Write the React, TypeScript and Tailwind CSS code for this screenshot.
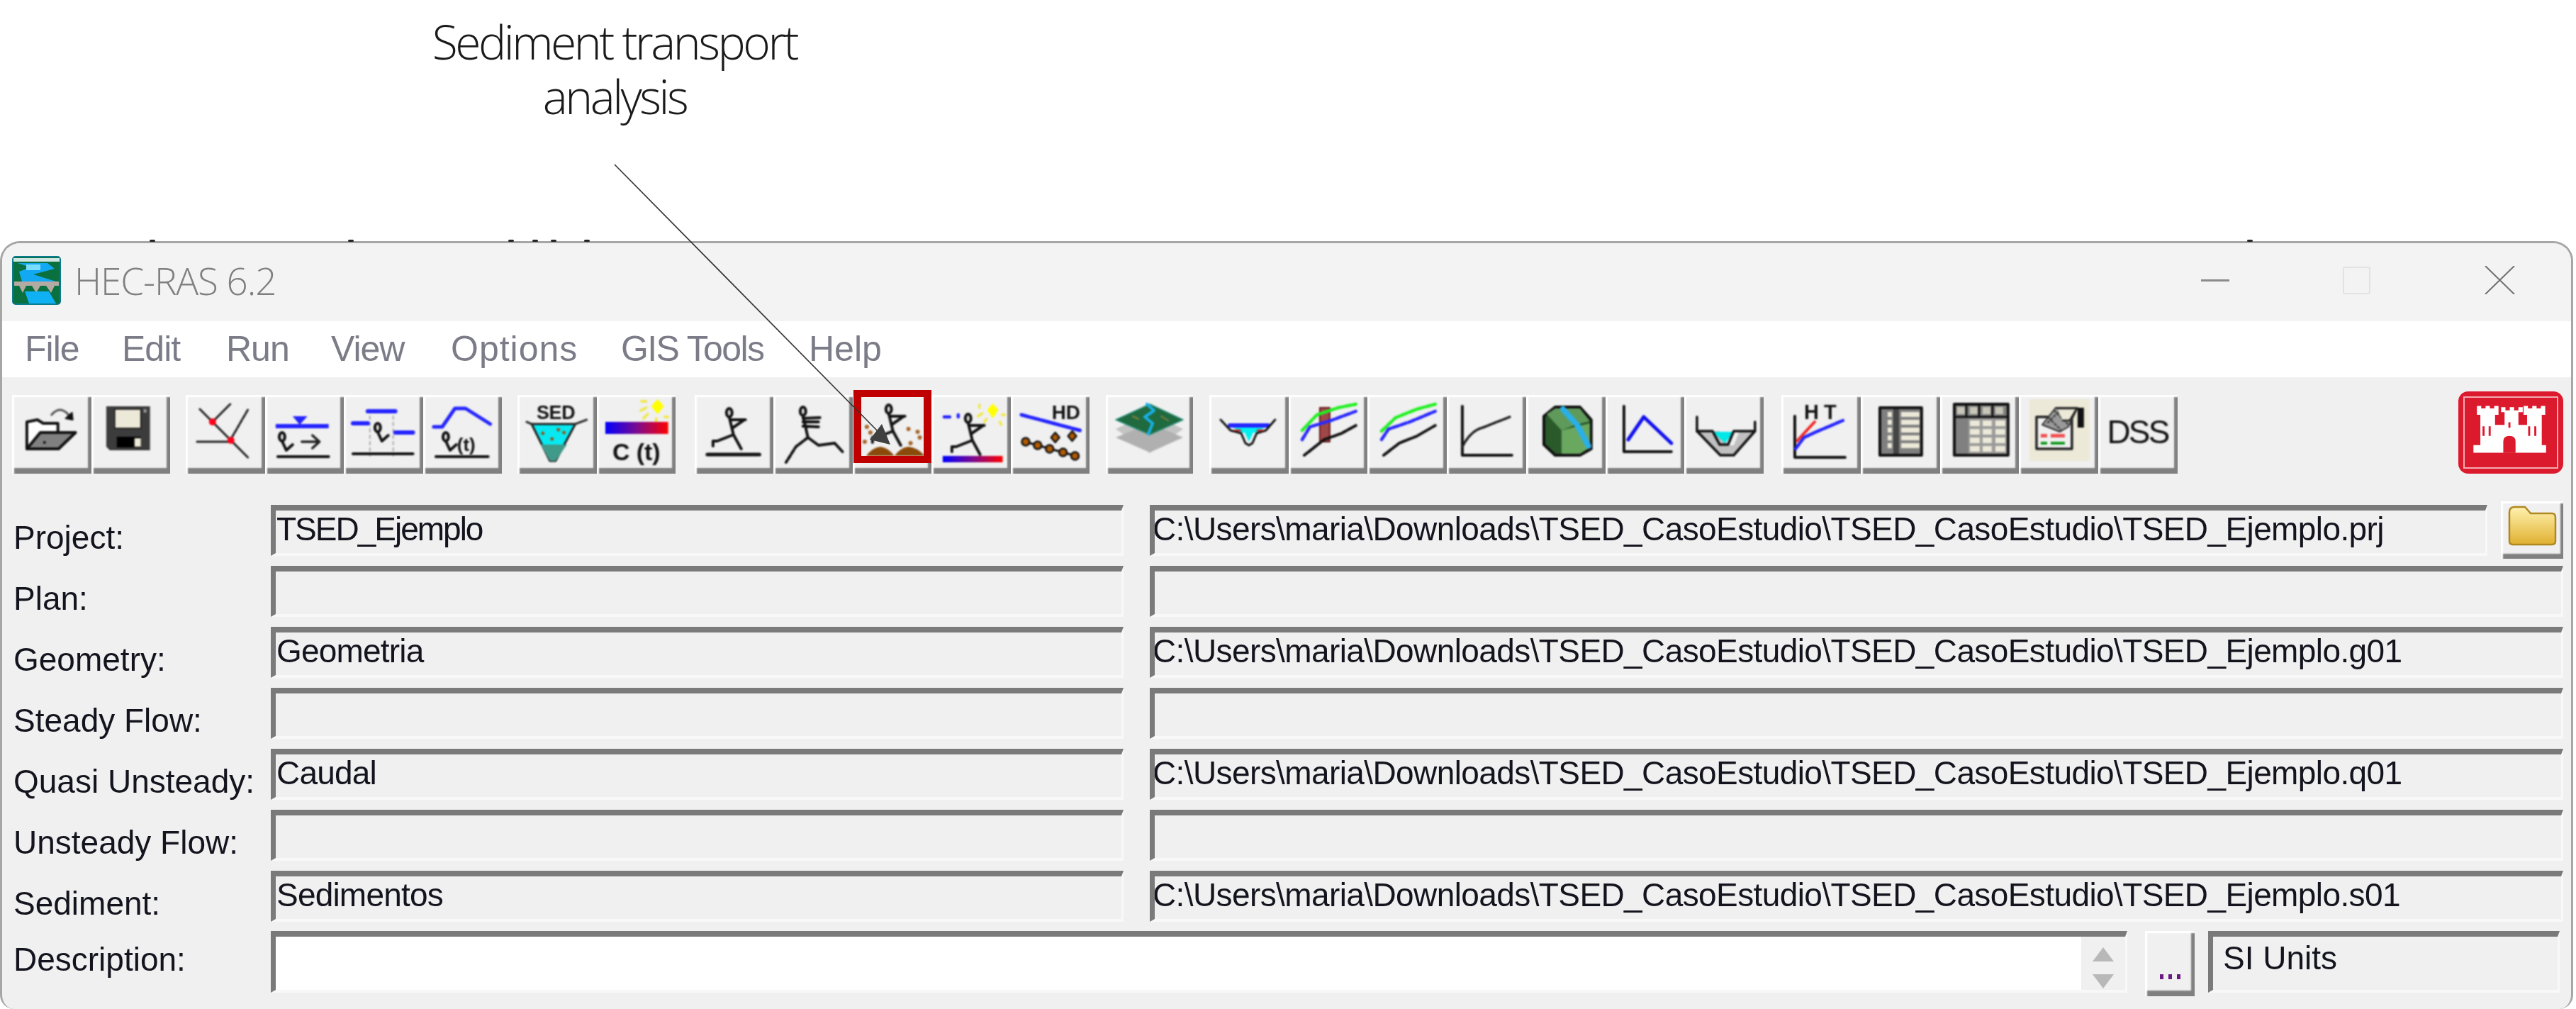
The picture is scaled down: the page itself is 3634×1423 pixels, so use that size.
import type { ReactNode } from "react";

const SANS = "Liberation Sans, sans-serif";

function Btn({ children, vw = 112 }: { children?: ReactNode; vw?: number }) {
  return (
    <div className="relative h-[111px] flex-1 bg-[#f0f0f0] shadow-[inset_3px_3px_2px_#fff,inset_-5px_-8px_2px_#808080]">
      <svg viewBox={`0 0 ${vw} 111`} preserveAspectRatio="none" className="h-full w-full blur-[0.9px]" fill="none" strokeLinecap="round" strokeLinejoin="round">
        {children}
      </svg>
    </div>
  );
}

// little "q" mark used on the flow buttons
function Gauge({ x, y }: { x: number; y: number }) {
  return (
    <g transform={`translate(${x} ${y})`} stroke="#111" strokeWidth="4">
      <ellipse cx="0" cy="0" rx="4" ry="6" fill="#ddd" />
      <path d="M0 6 L6 19 L15 11" />
    </g>
  );
}

function Runner({ x, y }: { x: number; y: number }) {
  return (
    <g transform={`translate(${x} ${y})`} stroke="#111" strokeWidth="4">
      <ellipse cx="0" cy="0" rx="4" ry="6" fill="#ddd" />
      <path d="M0 6 L6 31 L-17 40 L-23 40 L-23 47 M6 31 L17 51 M1 10 L23 10 M4 22 L20 11" />
    </g>
  );
}

function Curves({ green, blue, black }: { green: string; blue: string; black: string }) {
  return (
    <>
      <path d={green} stroke="#20f020" strokeWidth="4.5" strokeDasharray="9 3" />
      <path d={blue} stroke="#2828ff" strokeWidth="4.5" strokeDasharray="9 3" />
      <path d={black} stroke="#111" strokeWidth="4" strokeDasharray="6 2" />
    </>
  );
}

function Group({ w, ml, children }: { w: number; ml: string; children: ReactNode }) {
  return (
    <div className={`flex ${ml}`} style={{ width: w }}>
      {children}
    </div>
  );
}

function Field({ children, className = "" }: { children?: ReactNode; className?: string }) {
  return (
    <div className={`h-[72px] overflow-hidden whitespace-nowrap border-t-[8px] border-l-[7px] border-r-[3px] border-b-[4px] border-t-[#7a7a7a] border-l-[#7a7a7a] border-r-[#f8f8f8] border-b-[#f8f8f8] bg-[#f0f0f0] pl-px text-[46px] leading-[52px] text-[#14141e] blur-[0.5px] ${className}`}>
      {children}
    </div>
  );
}

const PATH = "C:\\Users\\maria\\Downloads\\TSED_CasoEstudio\\TSED_CasoEstudio\\TSED_Ejemplo";

const rows = [
  { label: "Project:", name: "TSED_Ejemplo", path: PATH + ".prj", nameClass: "tracking-[-2px]" },
  { label: "Plan:" },
  { label: "Geometry:", name: "Geometria", path: PATH + ".g01", nameClass: "tracking-[-0.8px]" },
  { label: "Steady Flow:" },
  { label: "Quasi Unsteady:", name: "Caudal", path: PATH + ".q01", nameClass: "tracking-[-0.8px]" },
  { label: "Unsteady Flow:" },
  { label: "Sediment:", name: "Sedimentos", path: PATH + ".s01", nameClass: "tracking-[-0.8px]" },
];

const menu = [
  { t: "File", c: "w-[74px] tracking-[-1px]" },
  { t: "Edit", c: "w-[84px] tracking-[-1px]" },
  { t: "Run", c: "w-[85px] tracking-[-1px]" },
  { t: "View", c: "w-[106px] tracking-[-1px]" },
  { t: "Options", c: "w-[177px] tracking-[1px]" },
  { t: "GIS Tools", c: "w-[202px] tracking-[-1.6px]" },
  { t: "Help", c: "w-[105px] tracking-[0px]" },
];

const specks = [211, 491, 717, 751, 777, 824, 3170];

export default function App() {
  return (
    <div className="relative h-[1423px] w-[3634px] overflow-hidden bg-white" style={{ fontFamily: SANS }}>
      <div className="h-[340px] w-[1734px] pt-[20px] text-center text-[66px] leading-[77px] font-light tracking-[-3.5px] text-[#1a1a1a] font-['Open_Sans',sans-serif]">
        <p>
          Sediment transport
          <br />
          analysis
        </p>
      </div>

      <div className="h-[1083px] w-[3630px] overflow-hidden rounded-t-[28px] rounded-b-[20px] border-x-[3px] border-t-[3px] border-[#a6a6a6] bg-[#f0f0f0]">
        {/* title bar */}
        <div className="flex h-[110px] items-center bg-[#f3f3f3] pb-[6px] pl-[14px]">
          <svg viewBox="0 0 69 69" className="h-[69px] w-[69px] blur-[0.6px]">
            <rect width="69" height="69" rx="5" fill="#0b7b8e" />
            <rect x="2" y="2" width="65" height="65" rx="3" fill="#0a7040" />
            <rect x="2" y="3" width="65" height="5" fill="#cfe6e0" />
            <path d="M8 10 H50 L60 18 L30 26 L62 36 H14 L10 22 L26 16 Z" fill="#12a8f2" />
            <rect x="20" y="12" width="20" height="8" fill="#7adcff" />
            <rect x="3" y="36" width="63" height="6" fill="#b3aaa2" />
            <path d="M10 42 H20 L15 52 Z M28 42 H40 L34 52 Z M48 42 H60 L55 52 Z" fill="#b3aaa2" />
            <path d="M18 50 H52 L62 67 H24 Z" fill="#10b0f4" />
          </svg>
          <span className="ml-[19px] text-[53px] leading-none font-light tracking-[-1.1px] text-[#808080] font-['Open_Sans',sans-serif]">HEC-RAS 6.2</span>
          <div className="ml-auto flex items-center pr-[79px]">
            <div className="h-[3px] w-[40px] bg-[#8a8a8a]" />
            <div className="ml-[160px] h-[39px] w-[39px] rounded-[3px] border-2 border-[#e2e2e2]" />
            <svg viewBox="0 0 43 40" className="ml-[161px] h-[40px] w-[43px]">
              <path d="M1 0 L42 40 M42 0 L1 40" stroke="#707070" strokeWidth="2" />
            </svg>
          </div>
        </div>

        {/* menu */}
        <div className="flex h-[79px] items-center gap-[63px] bg-white pb-[2px] pl-[32px] text-[50px] leading-none text-[#7c7c88] blur-[0.5px]">
          {menu.map((m) => (
            <span key={m.t} className={`whitespace-nowrap ${m.c}`}>{m.t}</span>
          ))}
        </div>

        {/* toolbar */}
        <div className="flex h-[180px] pt-[25px] pl-[14px]">
          <Group w={223} ml="">
            <Btn>
              <path d="M21 76 V38 L36 35 L44 40 H65 V53" fill="#fff" stroke="#111" strokeWidth="4" />
              <path d="M40 53 H90 L66 76 H21 Z" fill="#808080" stroke="#111" strokeWidth="4" />
              <circle cx="46" cy="67" r="2" fill="#111" />
              <path d="M56 28 Q68 14 80 28" stroke="#555" strokeWidth="3" />
              <path d="M76 33 L86 35 L85 25 Z" fill="#111" stroke="#111" strokeWidth="2" />
            </Btn>
            <Btn>
              <path d="M21 16 H83 V78 H26 L21 73 Z" fill="#3c3c3c" />
              <rect x="33" y="20" width="37" height="27" fill="#ece9d8" stroke="#111" strokeWidth="1.5" />
              <rect x="36" y="59" width="34" height="15" fill="#000" />
              <rect x="61" y="61" width="9" height="12" fill="#ece9d8" />
              <rect x="74" y="20" width="4" height="5" fill="#999" />
            </Btn>
          </Group>

          <Group w={446} ml="ml-[22px]">
            <Btn>
              <g stroke="#222" strokeWidth="3">
                <path d="M20 20 L88 88 M63 13 L38 38 M16 66 H63" />
                <path d="M88 21 L63 64" strokeDasharray="6 2" />
              </g>
              <circle cx="38" cy="38" r="5" fill="#ff0018" />
              <circle cx="64" cy="64" r="5" fill="#ff0018" />
            </Btn>
            <Btn>
              <path d="M39 30 H60 L49 42 Z" fill="#2424ff" />
              <rect x="15" y="41" width="75" height="6" fill="#2424ff" />
              <Gauge x={24} y={59} />
              <path d="M52 66 H76 M67 57 L77 66 L67 75" stroke="#222" strokeWidth="3.5" />
              <path d="M18 87 H90" stroke="#111" strokeWidth="4" />
            </Btn>
            <Btn>
              <path d="M37 30 V86 M70 30 V86" stroke="#aaa" strokeWidth="2" strokeDasharray="4 5" />
              <path d="M34 23 H73 M13 40 H34 M73 53 H98" stroke="#2424ff" strokeWidth="6" />
              <Gauge x={48} y={46} />
              <path d="M13 83 H98" stroke="#111" strokeWidth="4" />
            </Btn>
            <Btn>
              <path d="M15 45 H27 L45 19 H60 L95 41" stroke="#2424ff" strokeWidth="5" />
              <Gauge x={32} y={59} />
              <text x="48" y="79" fontFamily={SANS} fontWeight="700" fontSize="26" fill="#111">(t)</text>
              <path d="M18 87 H92" stroke="#111" strokeWidth="4" />
            </Btn>
          </Group>

          <Group w={223} ml="ml-[22px]">
            <Btn>
              <text x="27" y="34" fontFamily={SANS} fontWeight="700" fontSize="27" fill="#111" textLength="55">SED</text>
              <path d="M20 41 H82 L54 93 H46 Z" fill="#08e8f0" stroke="#222" strokeWidth="3" />
              <path d="M33 70 H70 L54 93 H46 Z" fill="#3f9a8a" />
              <path d="M13 38 L20 41 M82 41 L98 35" stroke="#333" strokeWidth="3" />
              <g fill="#8a5a20">
                <circle cx="36" cy="54" r="2.5" />
                <circle cx="58" cy="49" r="2.5" />
                <circle cx="66" cy="53" r="2.5" />
                <circle cx="49" cy="62" r="2.5" />
              </g>
            </Btn>
            <Btn>
              <defs>
                <linearGradient id="ramp">
                  <stop offset="0" stopColor="#0000ff" />
                  <stop offset="0.5" stopColor="#7a0a90" />
                  <stop offset="1" stopColor="#ff0000" />
                </linearGradient>
              </defs>
              <path d="M86 6 L95 16 L86 27 L77 16 Z" fill="#ffff00" />
              <circle cx="86" cy="16" r="7" fill="#ffff00" />
              <path d="M63 9 H70 M62 22 L70 18 M66 33 L72 27 M84 33 V38 M96 31 H101" stroke="#f0e840" strokeWidth="3.5" />
              <rect x="12" y="38" width="89" height="17" fill="url(#ramp)" />
              <text x="56" y="92" textAnchor="middle" fontFamily={SANS} fontWeight="700" fontSize="34" fill="#111">C (t)</text>
            </Btn>
          </Group>

          <Group w={557} ml="ml-[27px]">
            <Btn>
              <Runner x={49} y={25} />
              <path d="M18 84 H92" stroke="#111" strokeWidth="5" />
            </Btn>
            <Btn>
              <g stroke="#111" strokeWidth="4">
                <ellipse cx="42" cy="23" rx="4" ry="6" fill="#ddd" />
                <path d="M42 29 L49 60 M42 33 L66 32 M42 38 L64 38 M42 44 L64 45 M49 60 L64 71 L87 68 L98 80" />
                <path d="M49 60 L32 73 L18 95" strokeDasharray="6 3" />
              </g>
            </Btn>
            <div className="relative h-[111px] flex-1">
              <Btn>
                <Runner x={51} y={20} />
                <path d="M19 86 Q28 74 39 73 Q50 74 59 86 Q68 74 79 73 Q92 74 102 86 Z" fill="#8a4a0a" />
                <g fill="#a5652a">
                  <circle cx="20" cy="45" r="3" />
                  <circle cx="25" cy="53" r="3" />
                  <circle cx="17" cy="66" r="3" />
                  <circle cx="79" cy="48" r="3" />
                  <circle cx="92" cy="52" r="3" />
                  <circle cx="95" cy="60" r="3" />
                  <circle cx="82" cy="68" r="3" />
                </g>
              </Btn>
              <div className="absolute top-[-7px] left-px h-[103px] w-[110px] border-x-[11px] border-y-[10px] border-[#c00000]" />
            </div>
            <Btn>
              <path d="M87 12 L95 21 L87 33 L79 21 Z" fill="#ffff00" />
              <path d="M68 14 V18 M66 30 L72 26 M75 38 L78 34 M97 38 L99 42 M100 28 H104" stroke="#f0e840" strokeWidth="3.5" />
              <path d="M18 31 H26 M38 28 V31" stroke="#2424ff" strokeWidth="4.5" />
              <Runner x={52} y={33} />
              <rect x="16" y="86" width="85" height="9" fill="url(#ramp)" />
            </Btn>
            <Btn>
              <text x="58" y="34" fontFamily={SANS} fontWeight="700" fontSize="28" fill="#111">HD</text>
              <path d="M15 28 L98 50" stroke="#2424ff" strokeWidth="5" strokeDasharray="12 3" />
              <path d="M20 66 L92 86" stroke="#111" strokeWidth="3" />
              <g fill="#b05a00" stroke="#111" strokeWidth="2.5">
                <circle cx="21" cy="66" r="5.5" />
                <circle cx="38" cy="71" r="5.5" />
                <circle cx="55" cy="76" r="5.5" />
                <circle cx="74" cy="81" r="5.5" />
                <circle cx="91" cy="86" r="5.5" />
                <path d="M63 53 L69 60 L63 67 L57 60 Z M87 51 L93 58 L87 65 L81 58 Z" />
              </g>
            </Btn>
          </Group>

          <Group w={123} ml="ml-[23px]">
            <Btn vw={123}>
              <path d="M14 48 L62 25 L109 48 L62 82 Z" fill="#c4c4c4" />
              <path d="M14 60 L62 40 L109 60 L62 81 Z" fill="#b0b0b0" />
              <path d="M14 35 L62 13 L109 35 L62 56 Z" fill="#1f6a3f" stroke="#2b8f7a" strokeWidth="1.5" />
              <path d="M58 13 L68 22 L55 31 L66 40 L60 55" stroke="#18b0e8" strokeWidth="4" />
              <path d="M38 30 L46 34 M78 30 L88 36" stroke="#8c8040" strokeWidth="2" />
            </Btn>
          </Group>

          <Group w={782} ml="ml-[23px]">
            <Btn>
              <path d="M30 44 H82 L66 53 H62 L56 66 L50 53 H46 Z" fill="#00f0f0" />
              <path d="M29 43 H83" stroke="#2424ff" strokeWidth="6" />
              <path d="M16 35 L30 50 L45 54 L51 68 L56 71 L61 68 L67 54 L80 50 L93 35" stroke="#111" strokeWidth="3" />
              <path d="M36 50 H44 M68 50 H76" stroke="#d02020" strokeWidth="2.5" />
            </Btn>
            <Btn>
              <rect x="44" y="18" width="14" height="48" fill="#a04848" stroke="#6a1a1a" strokeWidth="2" />
              <Curves green="M19 50 L40 28 L70 18 L95 13" blue="M19 63 L30 45 L60 36 L95 23" black="M22 85 L50 63 L75 54 L95 43" />
            </Btn>
            <Btn>
              <Curves green="M20 51 L40 32 L70 20 L96 13" blue="M20 63 L30 48 L60 38 L96 23" black="M23 85 L45 68 L70 58 L96 43" />
            </Btn>
            <Btn>
              <path d="M22 16 V85 H92" stroke="#111" strokeWidth="4" />
              <path d="M22 73 Q34 50 51 46 L89 31" stroke="#222" strokeWidth="3.5" strokeDasharray="6 2" />
            </Btn>
            <Btn>
              <path d="M41 17 H76 L92 35 V76 L76 85 H41 L25 70 V30 Z" fill="#2a5a2a" stroke="#111" strokeWidth="4" />
              <path d="M29 27 L41 19 H76 L90 37 L70 42 L50 50 Z" fill="#5f9a5a" />
              <path d="M50 50 L90 40 V74 L76 83 H50 Z" fill="#6aa860" />
              <path d="M52 20 L68 38 M72 42 L88 72" stroke="#2ab0e8" strokeWidth="8" />
            </Btn>
            <Btn>
              <path d="M26 16 V80 H93" stroke="#111" strokeWidth="4" />
              <path d="M32 63 L54 31 L93 68" stroke="#1010f0" strokeWidth="5" />
            </Btn>
            <Btn>
              <path d="M18 31 V51 L51 85 H70 L100 51 V38 L100 51 H78 L70 71 H62 L50 51 H18 Z" fill="#c0c0c0" />
              <path d="M40 52 H70 L58 68 Z" fill="#00e8e8" />
              <path d="M18 31 V51 L51 85 H70 L100 51 V38" stroke="#111" strokeWidth="3.5" />
              <path d="M18 51 H40 L50 70 H62 L70 51 H100" stroke="#111" strokeWidth="3.5" />
            </Btn>
          </Group>

          <Group w={559} ml="ml-[25px]">
            <Btn>
              <text x="32" y="34" fontFamily={SANS} fontWeight="700" fontSize="29" fill="#111">H</text>
              <text x="60" y="34" fontFamily={SANS} fontWeight="700" fontSize="29" fill="#111">T</text>
              <path d="M19 30 V88 H90" stroke="#111" strokeWidth="4" />
              <path d="M22 65 L47 38" stroke="#f02828" strokeWidth="4" />
              <path d="M20 76 L32 60 L47 53 L87 36" stroke="#2424ff" strokeWidth="4.5" strokeDasharray="8 2" />
            </Btn>
            <Btn>
              <rect x="27" y="18" width="59" height="67" fill="#7f7f7f" stroke="#111" strokeWidth="4" />
              <rect x="46" y="20" width="8" height="63" fill="#444" />
              {[24, 35, 46, 57, 68].map((y) => (
                <g key={y} fill="#ece9d8">
                  <rect x="38" y={y} width="6" height="7" />
                  <rect x="57" y={y} width="26" height="7" />
                </g>
              ))}
            </Btn>
            <Btn>
              <rect x="20" y="13" width="76" height="72" fill="#808080" stroke="#111" strokeWidth="4" />
              <rect x="40" y="33" width="54" height="50" fill="#9a9a9a" />
              <path d="M20 31 H96 M37 13 V31 M55 13 V31 M74 13 V31" stroke="#111" strokeWidth="3" />
              {[24, 42, 60, 78].map((x) => (
                <rect key={x} x={x} y="17" width="11" height="10" fill="#c8c6b8" />
              ))}
              {[36, 48, 60, 72].map((y) => (
                <g key={y} fill="#ece9d8">
                  <rect x="42" y={y} width="14" height="8" />
                  <rect x="60" y={y} width="13" height="8" />
                  <rect x="78" y={y} width="14" height="8" />
                </g>
              ))}
            </Btn>
            <Btn>
              <rect x="15" y="6" width="85" height="87" fill="#ece9d8" />
              <rect x="25" y="31" width="50" height="45" fill="#f0f0f0" stroke="#222" strokeWidth="3.5" />
              <path d="M33 42 L52 18 H83 L70 45 L58 52 Z" fill="#999" stroke="#333" strokeWidth="2" />
              <path d="M50 22 L70 42 M42 32 L60 50 M60 20 L40 40" stroke="#333" strokeWidth="2" strokeDasharray="3 3" />
              <path d="M54 19 H82 L72 36 H62" fill="#ece9d8" stroke="#222" strokeWidth="2.5" />
              <rect x="83" y="18" width="9" height="28" fill="#111" />
              <rect x="31" y="55" width="9" height="5" fill="#f05050" />
              <rect x="45" y="55" width="20" height="5" fill="#f05050" />
              <rect x="31" y="66" width="9" height="4" fill="#109a20" />
              <rect x="45" y="66" width="20" height="4" fill="#109a20" />
            </Btn>
            <Btn>
              <text x="57" y="68" textAnchor="middle" fontFamily={SANS} fontSize="46" fill="#111" textLength="89">DSS</text>
            </Btn>
          </Group>

          {/* corps castle */}
          <div className="mt-[-5px] ml-auto mr-[11px] h-[116px] w-[148px] rounded-[14px] bg-[#dc1a2e] p-[7px] blur-[0.6px]">
            <svg viewBox="0 0 134 102" className="h-full w-full border-2 border-[#f4aab0]" fill="#fff">
              <path d="M12 78 H16 V30 H12 V16 H17 V20 H22 V16 H27 V20 H32 V16 H37 V30 H33 V46 L44 46 V26 H40 V18 H45 V23 H50 V18 H55 V23 H60 V18 H65 V26 H60 V46 L70 46 V30 H66 V16 H71 V20 H76 V16 H81 V20 H86 V16 H91 V30 H87 V78 H92 V90 H8 V78 Z" transform="translate(2 -3) scale(1.27 0.93)" />
              <path d="M56 81 V64 Q56 56 65 56 Q74 56 74 64 V81 Z" fill="#dc1a2e" />
              <path d="M27 42 V56 M36 42 V56 M94 42 V56 M103 42 V56 M65 36 V44" stroke="#dc1a2e" strokeWidth="3" />
            </svg>
          </div>
        </div>

        {/* project rows */}
        {rows.map((r, i) => (
          <div key={r.label} className="flex h-[86px] pl-[16px] pr-[11px]">
            <span className="w-[363px] pt-[14px] text-[46px] leading-[64px] whitespace-nowrap text-[#14141e] blur-[0.5px]">{r.label}</span>
            <Field className={`w-[1203px] ${r.nameClass ?? ""}`}>{r.name}</Field>
            <Field className="ml-[37px] flex-1 indent-[-4px] tracking-[-0.6px]">{r.path}</Field>
            {i === 0 && (
              <div className="relative ml-[19px] mt-[-5px] h-[81px] w-[88px] bg-[#f0f0f0] shadow-[inset_3px_3px_2px_#fff,inset_-4px_-7px_2px_#808080]">
                <svg viewBox="0 0 88 81" className="h-full w-full blur-[0.6px]">
                  <defs>
                    <linearGradient id="fold" x1="0" y1="0" x2="0" y2="1">
                      <stop offset="0" stopColor="#fff2b0" />
                      <stop offset="1" stopColor="#e0b030" />
                    </linearGradient>
                  </defs>
                  <path d="M12 15 Q12 8 20 8 H34 L42 17 H72 Q77 17 77 23 V56 Q77 61 72 61 H17 Q12 61 12 56 Z" fill="url(#fold)" stroke="#b08820" strokeWidth="2.5" />
                </svg>
              </div>
            )}
          </div>
        ))}

        {/* description row */}
        <div className="mt-[-1px] flex h-[92px] pl-[16px] pr-[16px]">
          <span className="w-[363px] text-[46px] leading-[80px] whitespace-nowrap text-[#14141e] blur-[0.5px]">Description:</span>
          <div className="flex h-[87px] w-[2619px] border-t-[8px] border-l-[7px] border-r-[3px] border-b-[4px] border-t-[#7a7a7a] border-l-[#7a7a7a] border-r-[#f8f8f8] border-b-[#f8f8f8]">
            <div className="flex-1 bg-white" />
            <div className="flex w-[62px] flex-col items-center justify-between bg-[#f0f0f0] pt-[15px] pb-[2px]">
              <svg viewBox="0 0 30 20" className="h-[20px] w-[30px]"><path d="M15 0 L30 20 H0 Z" fill="#b8b8b8" /></svg>
              <svg viewBox="0 0 30 20" className="h-[20px] w-[30px]"><path d="M0 0 H30 L15 20 Z" fill="#b8b8b8" /></svg>
            </div>
          </div>
          <div className="ml-[25px] flex h-[92px] w-[70px] items-end justify-center gap-[7px] bg-[#f0f0f0] pb-[24px] shadow-[inset_3px_3px_2px_#fff,inset_-5px_-8px_2px_#808080]">
            <i className="h-[7px] w-[5px] bg-[#6a1a80]" />
            <i className="h-[7px] w-[5px] bg-[#6a1a80]" />
            <i className="h-[7px] w-[5px] bg-[#6a1a80]" />
          </div>
          <Field className="ml-[19px] h-[87px] flex-1">
            <span className="block pt-[4px] pl-[13px]">SI Units</span>
          </Field>
        </div>
      </div>

      {specks.map((x) => (
        <i key={x} className="absolute top-[338px] h-[3px] w-[8px] rounded-full bg-[#222]" style={{ left: x }} />
      ))}

      {/* callout line */}
      <svg viewBox="0 0 3634 1423" className="pointer-events-none absolute inset-0 h-full w-full">
        <path d="M867 232 L1242 612" stroke="#333" strokeWidth="1.6" />
        <path d="M1256 627 L1244 598 L1227 620 Z" fill="#404040" />
      </svg>
    </div>
  );
}
